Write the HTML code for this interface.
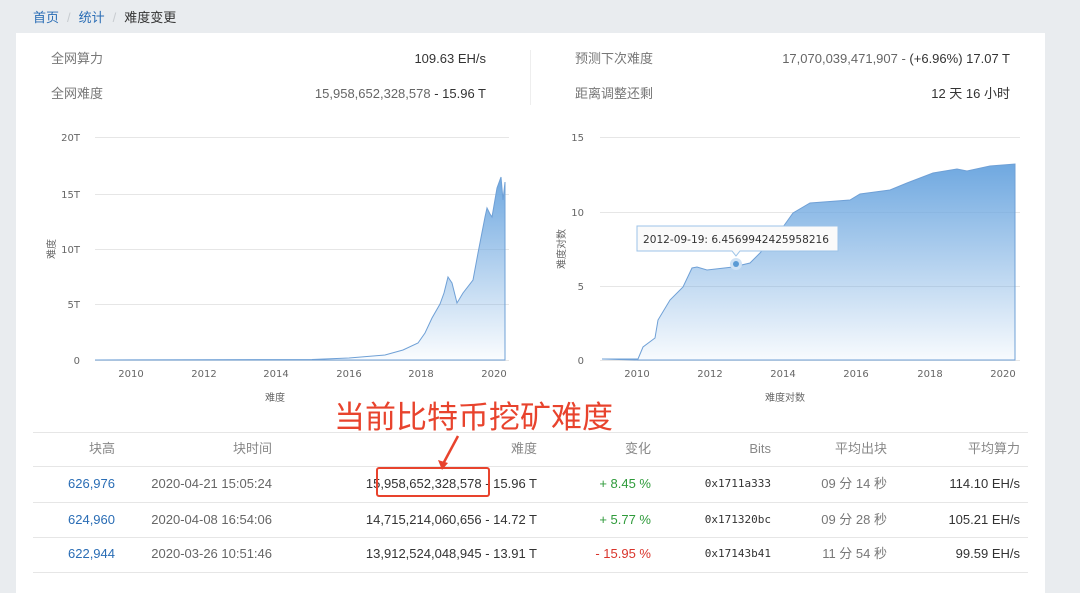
<!DOCTYPE html>
<html><head><meta charset="utf-8"><style>
*{margin:0;padding:0;box-sizing:border-box}
body{width:1080px;height:575px;background:#e9ecef;font-family:"Liberation Sans","Noto Sans CJK SC",sans-serif;position:relative;overflow:hidden;color:#333}
.a{position:absolute;white-space:nowrap;line-height:16px}
.bc{top:10px;left:33px;font-size:13px}
.bc span{color:#2a6db5}
.bc i{color:#c8ccd0;font-style:normal;margin:0 8px}
.card{position:absolute;left:16px;top:33px;width:1029px;height:560px;background:#fff}
.lbl{font-size:13px;color:#777}
.val{font-size:13px;color:#333;text-align:right}
.th{font-size:13px;color:#888;text-align:right;top:441px}
.td{font-size:13px;color:#333;text-align:right}
.mono{font-family:'DejaVu Sans Mono',monospace;font-size:11px}
.hl{position:absolute;left:33px;width:995px;height:1px;background:#e6e6e6}
</style></head><body>
<div class="a bc"><span>首页</span><i>/</i><span>统计</span><i>/</i>难度变更</div>
<div class="card"></div>
<div class="a lbl" style="left:51px;top:51px">全网算力</div>
<div class="a val" style="right:594px;top:51px">109.63 EH/s</div>
<div class="a lbl" style="left:51px;top:86px">全网难度</div>
<div class="a val" style="right:594px;top:86px"><span style="color:#666">15,958,652,328,578</span> - 15.96 T</div>
<div class="a" style="left:530px;top:50px;width:1px;height:55px;background:#eee"></div>
<div class="a lbl" style="left:575px;top:51px">预测下次难度</div>
<div class="a val" style="right:70px;top:51px"><span style="color:#666">17,070,039,471,907 -</span> (+6.96%) 17.07 T</div>
<div class="a lbl" style="left:575px;top:86px">距离调整还剩</div>
<div class="a val" style="right:70px;top:86px">12 天 16 小时</div>

<svg class="a" style="left:0;top:0;line-height:normal" width="1080" height="575" font-family="DejaVu Sans,sans-serif">
<defs>
<linearGradient id="g" x1="0" y1="0" x2="0" y2="1"><stop offset="0" stop-color="#6fa8e0"/><stop offset="1" stop-color="#6fa8e0" stop-opacity="0.03"/></linearGradient>
<linearGradient id="g2" x1="0" y1="0" x2="0" y2="1"><stop offset="0" stop-color="#6fa8e0"/><stop offset="1" stop-color="#6fa8e0" stop-opacity="0.05"/></linearGradient>
</defs>
<g stroke="#e6e6e6" stroke-width="1">
<line x1="95" y1="137.5" x2="509" y2="137.5"/><line x1="95" y1="194.5" x2="509" y2="194.5"/><line x1="95" y1="249.5" x2="509" y2="249.5"/><line x1="95" y1="304.5" x2="509" y2="304.5"/><line x1="95" y1="360.5" x2="509" y2="360.5"/>
<line x1="600" y1="137.5" x2="1020" y2="137.5"/><line x1="600" y1="212.5" x2="1020" y2="212.5"/><line x1="600" y1="286.5" x2="1020" y2="286.5"/><line x1="600" y1="360.5" x2="1020" y2="360.5"/>
</g>
<g fill="#666" font-size="10" text-anchor="end">
<text x="80" y="141">20T</text><text x="80" y="198">15T</text><text x="80" y="253">10T</text><text x="80" y="308">5T</text><text x="80" y="364">0</text>
<text x="584" y="141">15</text><text x="584" y="216">10</text><text x="584" y="290">5</text><text x="584" y="364">0</text>
</g>
<g fill="#666" font-size="10" text-anchor="middle">
<text x="131" y="377">2010</text><text x="204" y="377">2012</text><text x="276" y="377">2014</text><text x="349" y="377">2016</text><text x="421" y="377">2018</text><text x="494" y="377">2020</text>
<text x="637" y="377">2010</text><text x="710" y="377">2012</text><text x="783" y="377">2014</text><text x="856" y="377">2016</text><text x="930" y="377">2018</text><text x="1003" y="377">2020</text>
</g>
<g fill="#666" font-size="10" font-family="Liberation Sans,Noto Sans CJK SC,sans-serif" text-anchor="middle">
<text x="275" y="401">难度</text><text x="785" y="401">难度对数</text>
<text transform="translate(55,249) rotate(-90)">难度</text>
<text transform="translate(565,249) rotate(-90)">难度对数</text>
</g>
<path d="M95 360 L312 359.5 L349 358 L385 355 L403 350 L418 343 L425 333 L432 318 L440 304 L444 293 L448 277 L452 283 L457 303 L463 293 L473 280 L478 253 L485 217 L487 208 L490 214 L492 217 L497 188 L501 177 L503 200 L505 182 L505 360 Z" fill="url(#g)" stroke="#6fa0d6" stroke-width="1"/>
<path d="M602 359 L638 359 L643 347 L655 338 L658 320 L670 300 L683 287 L692 268 L697 267 L707 270 L733 267 L750 263 L760 253 L783 227 L793 213 L810 203 L850 200 L860 194 L890 190 L907 183 L933 173 L957 169 L967 171 L990 166 L1015 164 L1015 360 L638 360 Z" fill="url(#g2)" stroke="#6fa0d6" stroke-width="1"/>
<circle cx="736" cy="264" r="6" fill="#cfe2f5"/><circle cx="736" cy="264" r="3" fill="#5b9bd5"/>
<path d="M637 226 H838 V251 H740 L736 256 L732 251 H637 Z" fill="#fafafa" stroke="#9cc3e8" stroke-width="1"/>
<text x="643" y="243" font-size="11" fill="#333" textLength="186" lengthAdjust="spacingAndGlyphs">2012-09-19: 6.4569942425958216</text>
</svg>

<div class="hl" style="top:432px"></div>
<div class="hl" style="top:466px"></div>
<div class="hl" style="top:502px"></div>
<div class="hl" style="top:537px"></div>
<div class="hl" style="top:572px"></div>

<div class="a th" style="right:965px">块高</div>
<div class="a th" style="right:808px">块时间</div>
<div class="a th" style="right:543px">难度</div>
<div class="a th" style="right:429px">变化</div>
<div class="a th" style="right:309px">Bits</div>
<div class="a th" style="right:193px">平均出块</div>
<div class="a th" style="right:60px">平均算力</div>

<div class="a td" style="right:965px;top:476px;color:#2a6db5">626,976</div>
<div class="a td" style="right:808px;top:476px;color:#666">2020-04-21 15:05:24</div>
<div class="a td" style="right:543px;top:476px">15,958,652,328,578 - 15.96 T</div>
<div class="a td" style="right:429px;top:476px;color:#2e9a3a">+ 8.45 %</div>
<div class="a td mono" style="right:309px;top:476px">0x1711a333</div>
<div class="a td" style="right:193px;top:476px;color:#777">09 分 14 秒</div>
<div class="a td" style="right:60px;top:476px">114.10 EH/s</div>

<div class="a td" style="right:965px;top:512px;color:#2a6db5">624,960</div>
<div class="a td" style="right:808px;top:512px;color:#666">2020-04-08 16:54:06</div>
<div class="a td" style="right:543px;top:512px">14,715,214,060,656 - 14.72 T</div>
<div class="a td" style="right:429px;top:512px;color:#2e9a3a">+ 5.77 %</div>
<div class="a td mono" style="right:309px;top:512px">0x171320bc</div>
<div class="a td" style="right:193px;top:512px;color:#777">09 分 28 秒</div>
<div class="a td" style="right:60px;top:512px">105.21 EH/s</div>

<div class="a td" style="right:965px;top:546px;color:#2a6db5">622,944</div>
<div class="a td" style="right:808px;top:546px;color:#666">2020-03-26 10:51:46</div>
<div class="a td" style="right:543px;top:546px">13,912,524,048,945 - 13.91 T</div>
<div class="a td" style="right:429px;top:546px;color:#d9342b">- 15.95 %</div>
<div class="a td mono" style="right:309px;top:546px">0x17143b41</div>
<div class="a td" style="right:193px;top:546px;color:#777">11 分 54 秒</div>
<div class="a td" style="right:60px;top:546px">99.59 EH/s</div>

<div class="a" style="left:334px;top:397px;font-size:31px;line-height:36px;color:#e8432d;font-family:'Noto Sans CJK SC',sans-serif">当前比特币挖矿难度</div>
<div class="a" style="left:376px;top:467px;width:114px;height:30px;border:2px solid #e8432d;border-radius:3px"></div>
<svg class="a" style="left:430px;top:430px" width="40" height="45"><line x1="28" y1="6" x2="13" y2="34" stroke="#e8432d" stroke-width="2.5"/><path d="M8 30 L12 40 L18 33 Z" fill="#e8432d"/></svg>
</body></html>
